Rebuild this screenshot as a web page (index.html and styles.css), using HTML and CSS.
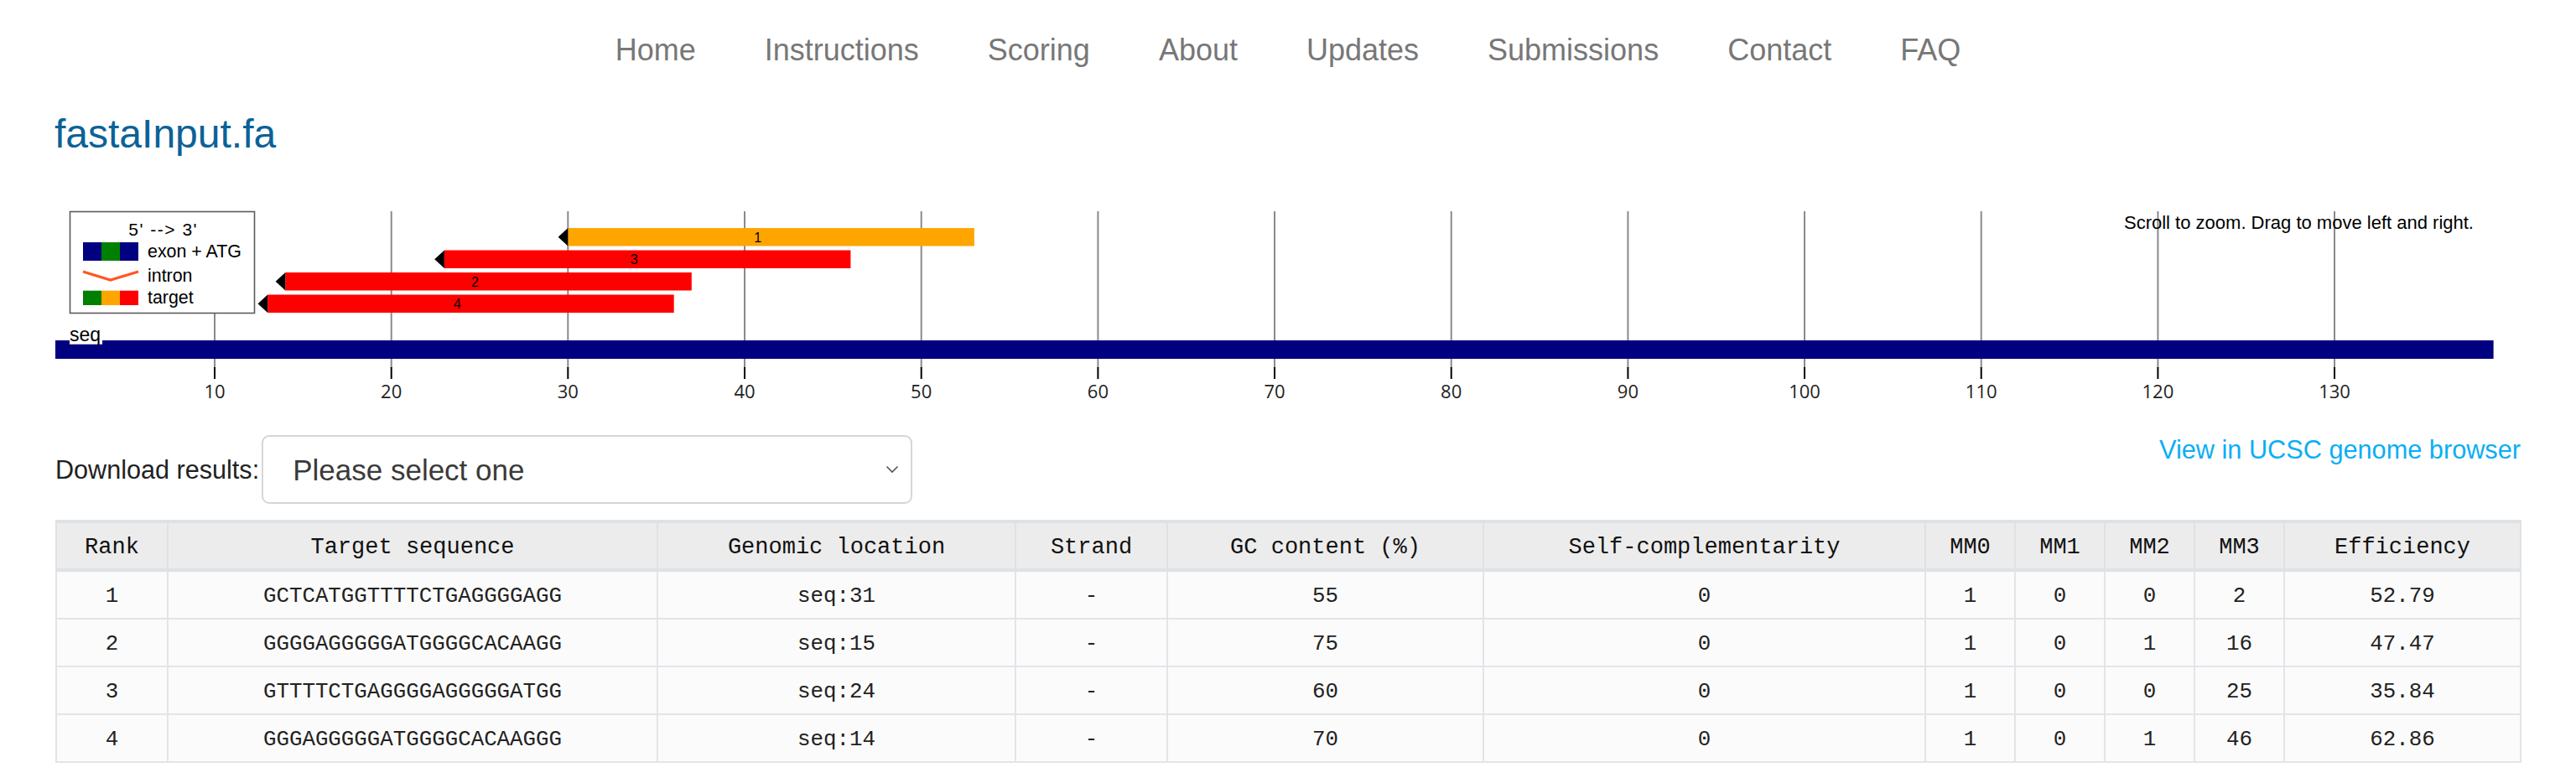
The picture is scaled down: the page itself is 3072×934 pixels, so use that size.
FILE: index.html
```html
<!DOCTYPE html>
<html lang="en">
<head>
<meta charset="utf-8">
<title>fastaInput.fa</title>
<link rel="stylesheet" href="styles.css">
</head>
<body>
<nav class="topnav">
  <a href="#">Home</a>
  <a href="#">Instructions</a>
  <a href="#">Scoring</a>
  <a href="#">About</a>
  <a href="#">Updates</a>
  <a href="#">Submissions</a>
  <a href="#">Contact</a>
  <a href="#">FAQ</a>
</nav>
<main class="content">
  <h1 class="file-title">fastaInput.fa</h1>

  <svg class="track" width="2940" height="250" viewBox="0 0 2940 250" xmlns="http://www.w3.org/2000/svg">
    <g class="grid">
      <line x1="190" y1="12" x2="190" y2="199"/>
      <line x1="400.7" y1="12" x2="400.7" y2="199"/>
      <line x1="611.3" y1="12" x2="611.3" y2="199"/>
      <line x1="822" y1="12" x2="822" y2="199"/>
      <line x1="1032.7" y1="12" x2="1032.7" y2="199"/>
      <line x1="1243.4" y1="12" x2="1243.4" y2="199"/>
      <line x1="1454" y1="12" x2="1454" y2="199"/>
      <line x1="1664.7" y1="12" x2="1664.7" y2="199"/>
      <line x1="1875.4" y1="12" x2="1875.4" y2="199"/>
      <line x1="2086" y1="12" x2="2086" y2="199"/>
      <line x1="2296.7" y1="12" x2="2296.7" y2="199"/>
      <line x1="2507.4" y1="12" x2="2507.4" y2="199"/>
      <line x1="2718" y1="12" x2="2718" y2="199"/>
    </g>
    <g class="ticks">
      <line x1="190" y1="198" x2="190" y2="212"/>
      <line x1="400.7" y1="198" x2="400.7" y2="212"/>
      <line x1="611.3" y1="198" x2="611.3" y2="212"/>
      <line x1="822" y1="198" x2="822" y2="212"/>
      <line x1="1032.7" y1="198" x2="1032.7" y2="212"/>
      <line x1="1243.4" y1="198" x2="1243.4" y2="212"/>
      <line x1="1454" y1="198" x2="1454" y2="212"/>
      <line x1="1664.7" y1="198" x2="1664.7" y2="212"/>
      <line x1="1875.4" y1="198" x2="1875.4" y2="212"/>
      <line x1="2086" y1="198" x2="2086" y2="212"/>
      <line x1="2296.7" y1="198" x2="2296.7" y2="212"/>
      <line x1="2507.4" y1="198" x2="2507.4" y2="212"/>
      <line x1="2718" y1="198" x2="2718" y2="212"/>
    </g>
    <g class="tick-labels">
      <text x="190" y="235">10</text>
      <text x="400.7" y="235">20</text>
      <text x="611.3" y="235">30</text>
      <text x="822" y="235">40</text>
      <text x="1032.7" y="235">50</text>
      <text x="1243.4" y="235">60</text>
      <text x="1454" y="235">70</text>
      <text x="1664.7" y="235">80</text>
      <text x="1875.4" y="235">90</text>
      <text x="2086" y="235">100</text>
      <text x="2296.7" y="235">110</text>
      <text x="2507.4" y="235">120</text>
      <text x="2718" y="235">130</text>
    </g>
    <text class="hint" x="2467" y="33">Scroll to zoom. Drag to move left and right.</text>

    <g class="targets">
      <rect class="t-orange" x="611.3" y="32" width="484.6" height="21.5"/>
      <polygon class="arrow" points="599.6,42.75 611.3,32 611.3,53.5"/>
      <text class="t-label" x="837.6" y="48.5">1</text>

      <rect class="t-red" x="463.9" y="58.5" width="484.5" height="21.5"/>
      <polygon class="arrow" points="452.2,69.25 463.9,58.5 463.9,80"/>
      <text class="t-label" x="690.2" y="75">3</text>

      <rect class="t-red" x="274.3" y="85" width="484.5" height="21.5"/>
      <polygon class="arrow" points="262.6,95.75 274.3,85 274.3,106.5"/>
      <text class="t-label" x="500.5" y="101.5">2</text>

      <rect class="t-red" x="253.2" y="111.5" width="484.5" height="21.5"/>
      <polygon class="arrow" points="241.5,122.25 253.2,111.5 253.2,133"/>
      <text class="t-label" x="479.4" y="128">4</text>
    </g>

    <g class="legend">
      <rect class="legend-box" x="17.5" y="12.5" width="220" height="121"/>
      <text class="legend-title" x="128.7" y="40.5">5' --&gt; 3'</text>
      <rect fill="#000080" x="33" y="49" width="22" height="22"/>
      <rect fill="#008000" x="55" y="49" width="22" height="22"/>
      <rect fill="#000080" x="77" y="49" width="22" height="22"/>
      <text class="legend-text" x="110" y="66.5">exon + ATG</text>
      <polyline class="intron" points="33,84 65.7,94 99,84"/>
      <text class="legend-text" x="110" y="96">intron</text>
      <rect fill="#008000" x="33" y="106.7" width="22" height="17.3"/>
      <rect fill="#ffa500" x="55" y="106.7" width="22" height="17.3"/>
      <rect fill="#ff0000" x="77" y="106.7" width="22" height="17.3"/>
      <text class="legend-text" x="110" y="121.7">target</text>
    </g>

    <rect class="seq-bar" x="0" y="166" width="2907.6" height="22"/>
    <rect class="seq-label-bg" x="17" y="150.7" width="39" height="20"/>
    <text class="seq-label" x="17" y="166.5">seq</text>
  </svg>

  <div class="download-row">
    <label class="download-label" for="dl">Download results:</label>
    <div class="select-wrap">
      <select id="dl" class="download-select">
        <option>Please select one</option>
      </select>
      <svg class="chevron" width="16" height="10" viewBox="0 0 16 10" xmlns="http://www.w3.org/2000/svg">
        <polyline points="1.5,1.5 8,8 14.5,1.5"/>
      </svg>
    </div>
    <a class="ucsc-link" href="#">View in UCSC genome browser</a>
  </div>

  <table class="results">
    <colgroup>
      <col class="c-rank">
      <col class="c-seq">
      <col class="c-loc">
      <col class="c-strand">
      <col class="c-gc">
      <col class="c-self">
      <col class="c-mm">
      <col class="c-mm">
      <col class="c-mm">
      <col class="c-mm">
      <col class="c-eff">
    </colgroup>
    <thead>
      <tr>
        <th>Rank</th>
        <th>Target sequence</th>
        <th>Genomic location</th>
        <th>Strand</th>
        <th>GC content (%)</th>
        <th>Self-complementarity</th>
        <th>MM0</th>
        <th>MM1</th>
        <th>MM2</th>
        <th>MM3</th>
        <th>Efficiency</th>
      </tr>
    </thead>
    <tbody>
      <tr>
        <td>1</td><td>GCTCATGGTTTTCTGAGGGGAGG</td><td>seq:31</td><td>-</td><td>55</td><td>0</td><td>1</td><td>0</td><td>0</td><td>2</td><td>52.79</td>
      </tr>
      <tr>
        <td>2</td><td>GGGGAGGGGGATGGGGCACAAGG</td><td>seq:15</td><td>-</td><td>75</td><td>0</td><td>1</td><td>0</td><td>1</td><td>16</td><td>47.47</td>
      </tr>
      <tr>
        <td>3</td><td>GTTTTCTGAGGGGAGGGGGATGG</td><td>seq:24</td><td>-</td><td>60</td><td>0</td><td>1</td><td>0</td><td>0</td><td>25</td><td>35.84</td>
      </tr>
      <tr>
        <td>4</td><td>GGGAGGGGGATGGGGCACAAGGG</td><td>seq:14</td><td>-</td><td>70</td><td>0</td><td>1</td><td>0</td><td>1</td><td>46</td><td>62.86</td>
      </tr>
    </tbody>
  </table>
</main>
</body>
</html>
```

FILE: styles.css
```css
html, body {
  margin: 0;
  padding: 0;
  background: #ffffff;
}

body {
  font-family: "Liberation Sans", Arial, sans-serif;
  color: #222;
}

/* ---------- top navigation ---------- */
.topnav {
  display: flex;
  justify-content: center;
  gap: 82px;
  padding-top: 40px;
  line-height: 40px;
  font-size: 36px;
}

.topnav a {
  color: #777777;
  text-decoration: none;
}

/* ---------- page content ---------- */
.content {
  padding: 0 66px;
}

.file-title {
  margin: 55px 0 0 -1px;
  font-size: 48px;
  line-height: 50px;
  font-weight: normal;
  color: #0b6297;
}

/* ---------- track chart ---------- */
.track {
  display: block;
  margin-top: 55px;
  font-family: "Liberation Sans", Arial, sans-serif;
}

.grid line {
  stroke: #8a8a8a;
  stroke-width: 2;
}

.ticks line {
  stroke: #000;
  stroke-width: 2;
}

.tick-labels text {
  font-family: "Open Sans", "Noto Sans", sans-serif;
  font-size: 22px;
  fill: #222;
  text-anchor: middle;
}

.hint {
  font-size: 22px;
  fill: #000;
}

.t-orange { fill: #ffa500; }
.t-red { fill: #ff0000; }
.arrow { fill: #000; }

.t-label {
  font-size: 16px;
  fill: #000;
  text-anchor: middle;
}

.legend-box {
  fill: #fff;
  stroke: #5a5a5a;
  stroke-width: 1.6;
}

.legend-title {
  font-size: 21px;
  letter-spacing: 1.5px;
  text-anchor: middle;
  fill: #000;
}

.legend-text {
  font-size: 21.4px;
  fill: #000;
}

.intron {
  fill: none;
  stroke: #ff5722;
  stroke-width: 3.2;
}

.seq-bar { fill: #000080; }
.seq-label-bg { fill: #fff; }
.seq-label {
  font-size: 23px;
  fill: #000;
}

/* ---------- download row ---------- */
.download-row {
  display: flex;
  align-items: flex-start;
  margin-top: 29px;
}

.download-label {
  margin-top: 23px;
  font-size: 30.6px;
  line-height: 36px;
  color: #222;
}

.select-wrap {
  position: relative;
  margin-left: 3px;
}

.download-select {
  appearance: none;
  -webkit-appearance: none;
  display: block;
  width: 776px;
  height: 82px;
  margin: 0;
  padding: 0 60px 0 35px;
  border: 2px solid #d3d6da;
  border-radius: 9px;
  background: #fff;
  font-family: "Liberation Sans", Arial, sans-serif;
  font-size: 35px;
  color: #3a3a3a;
}

.chevron {
  position: absolute;
  right: 16px;
  top: 36px;
  pointer-events: none;
}

.chevron polyline {
  fill: none;
  stroke: #555;
  stroke-width: 1.6;
}

.ucsc-link {
  margin-left: auto;
  margin-top: 0;
  font-size: 30.7px;
  line-height: 36px;
  color: #0aaef5;
  text-decoration: none;
}

/* ---------- results table ---------- */
.results {
  width: 2940px;
  margin-top: 19px;
  border-collapse: collapse;
  table-layout: fixed;
  font-family: "Liberation Mono", "Courier New", monospace;
  text-align: center;
}

.c-rank { width: 133px; }
.c-seq { width: 584px; }
.c-loc { width: 427px; }
.c-strand { width: 181px; }
.c-gc { width: 377px; }
.c-self { width: 527px; }
.c-mm { width: 107px; }
.c-eff { width: 282px; }

.results th {
  padding: 12px 0 8px;
  line-height: 34px;
  font-size: 27px;
  font-weight: normal;
  color: #111;
  background: #ececec;
  border: 2px solid #dee2e6;
  border-top-width: 4px;
  border-bottom-width: 4px;
}

.results td {
  padding: 12px 0 8px;
  line-height: 35px;
  font-size: 25.8px;
  color: #222;
  background: #fbfbfb;
  border: 2px solid #e2e5e8;
}
```
